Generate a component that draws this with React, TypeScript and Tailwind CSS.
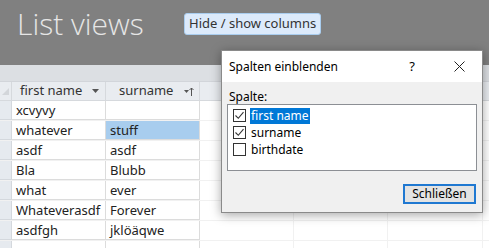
import React from "react";

const rows: [string, string][] = [
  ["xcvyvy", ""],
  ["whatever", "stuff"],
  ["asdf", "asdf"],
  ["Bla", "Blubb"],
  ["what", "ever"],
  ["Whateverasdf", "Forever"],
  ["asdfgh", "jklöäqwe"],
  ["", ""],
];

const font = { fontFamily: '"Noto Sans", "Open Sans", sans-serif' };

function ExtraCells() {
  return (
    <>
      <div className="w-[94px] shrink-0 border-r border-[#f1f1f1]" />
      <div className="w-[94px] shrink-0 border-r border-[#f1f1f1]" />
      <div className="w-[95px] shrink-0 border-r border-[#f1f1f1]" />
      <div className="flex-1" />
    </>
  );
}

function Check({ on }: { on: boolean }) {
  return (
    <div className="w-[13px] h-[13px] border border-[#333] bg-white flex items-center justify-center shrink-0">
      {on && (
        <svg width="11" height="11" viewBox="0 0 11 11">
          <path d="M1.5 5.5 L4.3 8.3 L9.5 2.2" fill="none" stroke="#333" strokeWidth="1.1" />
        </svg>
      )}
    </div>
  );
}

export default function App() {
  return (
    <div className="relative w-[489px] h-[248px] overflow-hidden bg-white" style={font}>
      {/* top band */}
      <div className="h-[65px] bg-[#808080] flex items-start">
        <div
          className="w-[184px] shrink-0 pl-[17px] mt-[3px] text-[30px] leading-[42px] text-[#e6e6e6] font-light"
          style={{ fontFamily: '"Open Sans", sans-serif' }}
        >
          List views
        </div>
        <div className="mt-[13px] h-[22px] px-[4px] flex items-center rounded-[3px] border border-[#a9cdef] bg-[#dceafb] text-[13px] text-[#333]">
          Hide / show columns
        </div>
      </div>
      {/* strip */}
      <div className="h-[17px] bg-[#dcdfe3] border-b border-[#d2d5da]" />
      {/* header */}
      <div className="flex h-[19px] bg-[#e9ecf0] border-b border-[#d6d9dd] text-[13px] text-[#333]">
        <div className="w-[12px] shrink-0 border-r border-[#d6d9dd] relative">
          <svg className="absolute left-[2px] top-[6px]" width="7" height="7" viewBox="0 0 7 7">
            <path d="M7 0 L7 7 L0 7 Z" fill="#d3d6da" />
          </svg>
        </div>
        <div className="w-[94px] shrink-0 border-r border-[#d6d9dd] flex items-center pl-[8px] pr-[6px]">
          <span className="flex-1">first name</span>
          <svg width="7" height="4" viewBox="0 0 7 4">
            <path d="M0 0 L7 0 L3.5 4 Z" fill="#555" />
          </svg>
        </div>
        <div className="w-[94px] shrink-0 border-r border-[#d6d9dd] flex items-center pl-[13px] pr-[5px]">
          <span className="flex-1">surname</span>
          <svg width="10" height="9" viewBox="0 0 10 9">
            <path d="M0 3 L5 3 L2.5 6 Z" fill="#555" />
            <path d="M7.5 1 L7.5 9 M5.5 3 L7.5 1 L9.5 3" stroke="#555" strokeWidth="1" fill="none" />
          </svg>
        </div>
        <div className="flex-1" />
      </div>
      {/* rows */}
      {rows.map(([a, b], i) => (
        <div key={i} className="flex h-[20px] text-[13px] text-[#222] border-b border-[#f1f1f1]">
          <div className="w-[12px] shrink-0 bg-[#e6eaef] border-r border-b border-[#d4d8dd]" />
          <div className="w-[94px] shrink-0 border-r border-b border-[#dcdcdc] flex items-center pl-[4px] pt-[1px] whitespace-nowrap">
            {a}
          </div>
          <div
            className={
              "w-[94px] shrink-0 border-r border-b border-[#dcdcdc] flex items-center pl-[4px] pt-[1px] whitespace-nowrap " +
              (i === 1 ? "bg-[#a8cdee]" : "")
            }
          >
            {b}
          </div>
          <ExtraCells />
        </div>
      ))}

      {/* dialog */}
      <div className="absolute left-[221px] top-[50px] w-[262px] h-[163px] border border-[#8a8a8a] bg-[#f0f0f0] shadow-[0_2px_10px_rgba(0,0,0,0.35)] flex flex-col text-[12px] text-black">
        <div className="h-[31px] shrink-0 bg-white flex items-center pl-[7px]">
          <span className="flex-1">Spalten einblenden</span>
          <span className="w-[20px] text-center text-[13px] mr-[32px]">?</span>
          <svg className="mr-[17px]" width="11" height="11" viewBox="0 0 11 11">
            <path d="M0.5 0.5 L10.5 10.5 M10.5 0.5 L0.5 10.5" stroke="#222" strokeWidth="1" />
          </svg>
        </div>
        <div className="flex-1 flex flex-col px-[5px]">
          <div className="pl-[2px] mt-[8px] h-[14px] leading-[14px]">Spalte:</div>
          <div className="h-[67px] bg-white border border-[#8c8f94] pt-[2px] pl-[5px] flex flex-col">
            {[
              ["first name", true, true],
              ["surname", true, false],
              ["birthdate", false, false],
            ].map(([label, on, sel]) => (
              <div key={label as string} className="h-[17px] flex items-center">
                <Check on={on as boolean} />
                <span
                  className={
                    "ml-[4px] px-[1px] leading-[16px] " + (sel ? "bg-[#0078d7] text-white" : "")
                  }
                >
                  {label as string}
                </span>
              </div>
            ))}
          </div>
          <div className="flex justify-end mt-[13px] pr-[1px]">
            <div className="w-[73px] h-[20px] border-2 border-[#1f78d1] bg-[#e3e3e3] flex items-center justify-center">
              Schließen
            </div>
          </div>
        </div>
      </div>
    </div>
  );
}
